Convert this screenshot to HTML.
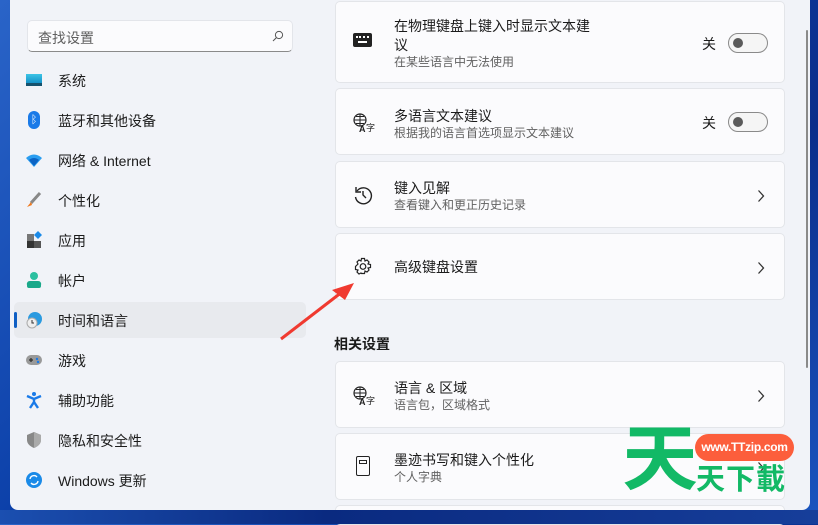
<!DOCTYPE html>
<html><head><meta charset="utf-8"><style>
*{margin:0;padding:0;box-sizing:border-box}
body{width:818px;height:524px;overflow:hidden;position:relative;background:linear-gradient(135deg,#2a64c8,#0b3fa8 40%,#0a2d8a 70%,#1a55c0);font-family:"Liberation Sans","Noto Sans CJK SC",sans-serif;color:#1b1b1b}
.win{position:absolute;left:10px;top:-4px;width:800px;height:514px;background:#f1f3f8;border-radius:0 0 8px 8px}
.search{position:absolute;left:27px;top:20px;width:266px;height:32px;background:#fbfbfd;border:1px solid #e3e5ea;border-bottom:1px solid #8a8a8a;border-radius:5px;font-size:14px;color:#5f5f5f;padding:7px 10px}
.nav{position:absolute;left:58px;font-size:14px;line-height:20px}
.ic{position:absolute;width:18px;height:18px}
.sel{position:absolute;left:14px;top:302px;width:292px;height:36px;background:#e8eaee;border-radius:5px}
.selbar{position:absolute;left:14px;top:312px;width:3px;height:16px;background:#0f5fc4;border-radius:2px}
.card{position:absolute;left:335px;width:450px;background:#fbfbfd;border:1px solid #e3e5e9;border-radius:5px}
.t{position:absolute;left:58px;font-size:14px;line-height:19px;color:#1b1b1b}
.s{position:absolute;left:58px;font-size:12px;line-height:16px;color:#616161}
.chev{position:absolute;right:19px}
.tog{position:absolute;right:16px;width:40px;height:20px;border:1px solid #8a8a8a;border-radius:10px;background:#f5f5f5}
.tog:after{content:"";position:absolute;left:4px;top:4px;width:10px;height:10px;border-radius:50%;background:#5a5a5a}
.off{position:absolute;right:68px;font-size:14px}
.ci{position:absolute;left:17px}
</style></head><body>
<div class="win"></div>
<div style="position:absolute;left:806px;top:30px;width:2px;height:338px;background:#8a8a8a;border-radius:1px"></div>
<div class="search">查找设置<svg style="position:absolute;right:8px;top:9px" width="12" height="12" viewBox="0 0 12 12"><circle cx="7" cy="5" r="3.6" stroke="#555" fill="none"/><path d="M4.4 7.6L1 11" stroke="#555"/></svg></div>
<div class="sel"></div><div class="selbar"></div>
<div class="ic" style="left:26px;top:74px;width:16px;height:12px;background:linear-gradient(#3cc4e6,#1592c8);border-bottom:3px solid #16526e"></div>
<div class="nav" style="top:71px">系统</div>
<div class="ic" style="left:28px;top:111px;width:12px;height:18px;border-radius:6px;background:#1a7ae8;color:#fff;font-size:11px;text-align:center;line-height:18px">ᛒ</div>
<div class="nav" style="top:111px">蓝牙和其他设备</div>
<svg class="ic" style="left:25px;top:152px" viewBox="0 0 18 18"><path d="M1 6Q9 -1 17 6L9 15Z" fill="#2a9df0"/><path d="M4 8Q9 4 14 8L9 14Z" fill="#0c63c4"/></svg>
<div class="nav" style="top:151px">网络 &amp; Internet</div>
<svg class="ic" style="left:25px;top:191px" viewBox="0 0 18 18"><path d="M15 2L6 12" stroke="#888" stroke-width="3"/><path d="M6 11L2 16L7 14Z" fill="#f07a20"/></svg>
<div class="nav" style="top:191px">个性化</div>
<svg class="ic" style="left:26px;top:231px" viewBox="0 0 18 18"><rect x="1" y="3" width="7" height="7" fill="#777"/><rect x="1" y="10" width="7" height="7" fill="#333"/><rect x="8" y="10" width="7" height="7" fill="#555"/><path d="M12 0L16 4L12 8L8 4Z" fill="#1a8ae8"/></svg>
<div class="nav" style="top:231px">应用</div>
<svg class="ic" style="left:25px;top:271px" viewBox="0 0 18 18"><circle cx="9" cy="5" r="4" fill="#2bc0a0"/><path d="M2 14a3 3 0 0 1 3-4h8a3 3 0 0 1 3 4v1a2 2 0 0 1-2 2H4a2 2 0 0 1-2-2Z" fill="#1aa88a"/></svg>
<div class="nav" style="top:271px">帐户</div>
<svg class="ic" style="left:25px;top:311px" viewBox="0 0 18 18"><circle cx="10" cy="8" r="7" fill="#2a9ae0"/><circle cx="7" cy="12" r="5" fill="#eee" stroke="#aaa"/><path d="M7 9v3h2" stroke="#333" fill="none"/></svg>
<div class="nav" style="top:311px">时间和语言</div>
<svg class="ic" style="left:25px;top:351px" viewBox="0 0 18 18"><rect x="1" y="4" width="16" height="10" rx="5" fill="#999"/><path d="M4 9h4M6 7v4" stroke="#333" stroke-width="1.3"/><circle cx="12" cy="8" r="1.2" fill="#1a7ae8"/><circle cx="13" cy="11" r="1.2" fill="#1a7ae8"/></svg>
<div class="nav" style="top:351px">游戏</div>
<svg class="ic" style="left:25px;top:391px" viewBox="0 0 18 18"><circle cx="9" cy="3" r="2" fill="#1a7ae8"/><path d="M2 5L9 8L16 5M9 8V11L5 17M9 11L13 17" stroke="#1a7ae8" stroke-width="2.4" fill="none"/></svg>
<div class="nav" style="top:391px">辅助功能</div>
<svg class="ic" style="left:25px;top:431px" viewBox="0 0 18 18"><path d="M9 1L16 4V9Q16 14 9 17Q2 14 2 9V4Z" fill="#888"/><path d="M9 1L16 4V9Q16 14 9 17Z" fill="#aaa"/></svg>
<div class="nav" style="top:431px">隐私和安全性</div>
<svg class="ic" style="left:25px;top:471px" viewBox="0 0 18 18"><circle cx="9" cy="9" r="8" fill="#1a8ae8"/><path d="M5 8a4 4 0 0 1 7-2M13 10a4 4 0 0 1-7 2" stroke="#fff" stroke-width="1.4" fill="none"/></svg>
<div class="nav" style="top:471px">Windows 更新</div>

<div class="card" style="top:1px;height:82px">
<div class="ci" style="top:31px;width:19px;height:14px;background:#222;border-radius:2px"><div style="margin:3px 3px;height:2px;border-top:2px dotted #fff"></div><div style="margin:2px 5px;height:2px;background:#fff"></div></div>
<div class="t" style="top:15px">在物理键盘上键入时显示文本建<br>议</div>
<div class="s" style="top:52px">在某些语言中无法使用</div>
<div class="off" style="top:32px">关</div><div class="tog" style="top:31px"></div>
</div>
<div class="card" style="top:88px;height:67px">
<svg class="ci" style="top:24px" width="22" height="20" viewBox="0 0 22 20"><circle cx="7" cy="7" r="6" stroke="#222" stroke-width="1.2" fill="none"/><path d="M1 7h12M7 1v12M3 3.5h8M3 10.5h8" stroke="#222" stroke-width="1"/><text x="6" y="19" font-size="9" font-family="Liberation Sans" font-weight="bold" fill="#222">A</text><text x="13" y="18" font-size="9" font-family="Noto Sans CJK SC" fill="#222">字</text></svg>
<div class="t" style="top:18px">多语言文本建议</div>
<div class="s" style="top:36px">根据我的语言首选项显示文本建议</div>
<div class="off" style="top:24px">关</div><div class="tog" style="top:23px"></div>
</div>
<div class="card" style="top:161px;height:67px">
<svg class="ci" style="top:23px" width="20" height="20" viewBox="0 0 20 20"><path d="M4 6A8 8 0 1 1 2.5 12" stroke="#222" stroke-width="1.4" fill="none"/><path d="M3 2v5h5" stroke="#222" stroke-width="1.4" fill="none"/><path d="M10 6v4l3 3" stroke="#222" stroke-width="1.4" fill="none"/></svg>
<div class="t" style="top:17px">键入见解</div>
<div class="s" style="top:35px">查看键入和更正历史记录</div>
<svg class="chev" style="top:27px" width="8" height="14" viewBox="0 0 8 14"><path d="M1.5 1.5L6.5 7L1.5 12.5" stroke="#333" stroke-width="1.3" fill="none"/></svg>
</div>
<div class="card" style="top:233px;height:67px">
<svg class="ci" style="top:23px" width="20" height="20" viewBox="0 0 20 20"><path d="M8.5 1.5h3l.5 2.5 2-1 2 2-1 2 2.5.5v3l-2.5.5 1 2-2 2-2-1-.5 2.5h-3L8 16l-2 1-2-2 1-2-2.5-.5v-3L5 7 4 5l2-2 2 1Z" stroke="#222" stroke-width="1.2" fill="none"/><circle cx="10" cy="9.5" r="2.8" stroke="#222" stroke-width="1.2" fill="none"/></svg>
<div class="t" style="top:24px">高级键盘设置</div>
<svg class="chev" style="top:27px" width="8" height="14" viewBox="0 0 8 14"><path d="M1.5 1.5L6.5 7L1.5 12.5" stroke="#333" stroke-width="1.3" fill="none"/></svg>
</div>
<div style="position:absolute;left:334px;top:334px;font-size:14px;font-weight:bold">相关设置</div>
<div class="card" style="top:361px;height:67px">
<svg class="ci" style="top:24px" width="22" height="20" viewBox="0 0 22 20"><circle cx="7" cy="7" r="6" stroke="#222" stroke-width="1.2" fill="none"/><path d="M1 7h12M7 1v12M3 3.5h8M3 10.5h8" stroke="#222" stroke-width="1"/><text x="6" y="19" font-size="9" font-family="Liberation Sans" font-weight="bold" fill="#222">A</text><text x="13" y="18" font-size="9" font-family="Noto Sans CJK SC" fill="#222">字</text></svg>
<div class="t" style="top:17px">语言 &amp; 区域</div>
<div class="s" style="top:35px">语言包，区域格式</div>
<svg class="chev" style="top:27px" width="8" height="14" viewBox="0 0 8 14"><path d="M1.5 1.5L6.5 7L1.5 12.5" stroke="#333" stroke-width="1.3" fill="none"/></svg>
</div>
<div class="card" style="top:433px;height:67px">
<div class="ci" style="top:22px;width:14px;height:20px;border:1.5px solid #222;border-radius:2px;left:20px"><div style="margin:3px 2px;height:4px;border:1px solid #222"></div></div>
<div class="t" style="top:17px">墨迹书写和键入个性化</div>
<div class="s" style="top:35px">个人字典</div>
<svg class="chev" style="top:27px" width="8" height="14" viewBox="0 0 8 14"><path d="M1.5 1.5L6.5 7L1.5 12.5" stroke="#333" stroke-width="1.3" fill="none"/></svg>
</div>
<div class="card" style="top:505px;height:20px"></div>
<div style="position:absolute;left:0;top:510px;width:818px;height:14px;background:linear-gradient(90deg,#1b4fb0,#0a2a80 40%,#163e9a)"></div>

<svg style="position:absolute;left:0;top:0" width="818" height="524"><path d="M281 339L342 292" stroke="#f03a30" stroke-width="3"/><path d="M354 283L332 290L345 300Z" fill="#f03a30"/></svg>

<div style="position:absolute;left:624px;top:424px;font-size:72px;line-height:72px;font-weight:bold;color:#12b966;transform:scaleX(1.05)">天</div>
<div style="position:absolute;left:695px;top:434px;width:99px;height:27px;background:#fc5e3c;border-radius:14px;color:#fff;font-size:12px;font-weight:bold;text-align:center;line-height:27px;letter-spacing:-0.3px">www.TTzip.com</div>
<div style="position:absolute;left:696px;top:464px;font-size:29px;line-height:32px;font-weight:bold;color:#12b966;letter-spacing:1px">天下載</div>
</body></html>
